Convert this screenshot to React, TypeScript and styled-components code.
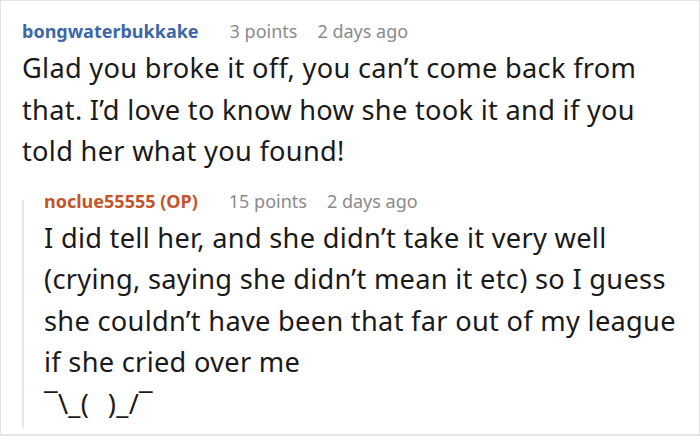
import styled, { createGlobalStyle } from "styled-components";

const GlobalStyle = createGlobalStyle`
    html, body {
        margin: 0;
        padding: 0;
        background: #fff;
    }
    body {
        font-family: "Noto Sans", "DejaVu Sans", sans-serif;
    }
`

interface CommentData {
    author: string;
    op?: boolean;
    points: string;
    age: string;
    lines: string[];
}

const parent: CommentData = {
    author: "bongwaterbukkake",
    points: "3 points",
    age: "2 days ago",
    lines: [
        "Glad you broke it off, you can\u2019t come back from",
        "that. I\u2019d love to know how she took it and if you",
        "told her what you found!",
    ],
};

const reply: CommentData = {
    author: "noclue55555 (OP)",
    op: true,
    points: "15 points",
    age: "2 days ago",
    lines: [
        "I did tell her, and she didn\u2019t take it very well",
        "(crying, saying she didn\u2019t mean it etc) so I guess",
        "she couldn\u2019t have been that far out of my league",
        "if she cried over me",
        "\u00af\\_(\u2002\u2009)_/\u00af",
    ],
};

function CommentBlock({ data }: { data: CommentData }) {
    return <Comment>
        <Meta>
            <Author $op={data.op}>{data.author}</Author>
            <MetaText>{data.points}</MetaText>
            <MetaText>{data.age}</MetaText>
        </Meta>
        <Body>
            {data.lines.map((l, i) => <Line key={i}>{l}</Line>)}
        </Body>
    </Comment>
}

export default function App() {
    return <>
        <GlobalStyle/>
        <Frame>
            <CommentBlock data={parent}/>
            <Thread>
                <Rail/>
                <CommentBlock data={reply}/>
            </Thread>
        </Frame>
    </>
}

const Frame = styled.div`
    box-sizing: border-box;
    width: 700px;
    height: 436px;
    border: 1px solid #e4e4e4;
    border-bottom-width: 2px;
    padding: 18px 0 0 21px;
    overflow: hidden;
    display: flex;
    flex-direction: column;
    gap: 17px;
`

const Comment = styled.div`
    display: flex;
    flex-direction: column;
    gap: 4px;
`

const Meta = styled.div`
    display: flex;
    align-items: baseline;
    gap: 20px;
    font-size: 18px;
    line-height: 24px;
`

const Author = styled.span<{ $op?: boolean }>`
    font-weight: 700;
    margin-right: 11px;
    color: ${p => p.$op ? "#c4552b" : "#3d67a8"};
`

const MetaText = styled.span`
    color: #8a8a8a;
`

const Body = styled.div`
    font-size: 27.2px;
    line-height: 41.5px;
    letter-spacing: 0.3px;
    color: #1a1a1a;
`

const Line = styled.div`
    white-space: pre;
`

const Thread = styled.div`
    display: flex;
    align-items: stretch;
`

const Rail = styled.div`
    flex: 0 0 2px;
    margin: 11px 20px -4px 0;
    background: #e6e6e6;
`
